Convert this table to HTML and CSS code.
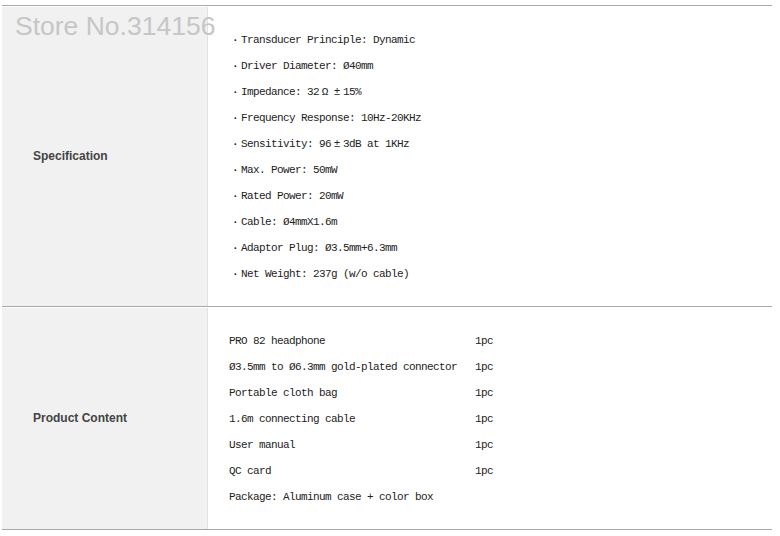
FILE: index.html
```html
<!DOCTYPE html>
<html>
<head>
<meta charset="utf-8">
<link rel="stylesheet" href="styles.css">
</head>
<body>
<div class="sheet">
  <div class="watermark">Store No.314156</div>
  <section class="row">
    <div class="label">Specification</div>
    <div class="value">
      <ul class="specs">
        <li>Transducer Principle: Dynamic</li>
        <li>Driver Diameter: Ø40mm</li>
        <li>Impedance: 32<span class="fw">Ω</span><span class="fw">±</span>15%</li>
        <li>Frequency Response: 10Hz-20KHz</li>
        <li>Sensitivity: 96<span class="fw">±</span>3dB at 1KHz</li>
        <li>Max. Power: 50mW</li>
        <li>Rated Power: 20mW</li>
        <li>Cable: Ø4mmX1.6m</li>
        <li>Adaptor Plug: Ø3.5mm+6.3mm</li>
        <li>Net Weight: 237g (w/o cable)</li>
      </ul>
    </div>
  </section>
  <section class="row">
    <div class="label">Product Content</div>
    <div class="value">
      <div class="items">
        <div class="item"><span class="name">PRO 82 headphone</span><span class="qty">1pc</span></div>
        <div class="item"><span class="name">Ø3.5mm to Ø6.3mm gold-plated connector</span><span class="qty">1pc</span></div>
        <div class="item"><span class="name">Portable cloth bag</span><span class="qty">1pc</span></div>
        <div class="item"><span class="name">1.6m connecting cable</span><span class="qty">1pc</span></div>
        <div class="item"><span class="name">User manual</span><span class="qty">1pc</span></div>
        <div class="item"><span class="name">QC card</span><span class="qty">1pc</span></div>
        <div class="item"><span class="name">Package: Aluminum case + color box</span></div>
      </div>
    </div>
  </section>
</div>
</body>
</html>
```
FILE: styles.css
```css
html, body {
  margin: 0;
  padding: 0;
  background: #ffffff;
}
.sheet {
  position: relative;
  width: 770px;
  margin: 5px 0 0 2px;
  border-top: 1px solid #a8a8a8;
}
.watermark {
  position: absolute;
  left: 13px;
  top: 5px;
  font-family: "Liberation Sans", Arial, sans-serif;
  font-size: 26.5px;
  color: #c6c6c6;
  white-space: nowrap;
  z-index: 2;
}
.row {
  display: flex;
  border-bottom: 1px solid #a8a8a8;
  border-top: 1px solid #ffffff;
}
.label {
  width: 206px;
  flex: none;
  background: #f1f1f1;
  border-right: 1px solid #e2e2e2;
  display: flex;
  align-items: center;
  padding-left: 31px;
  padding-bottom: 2px;
  box-sizing: border-box;
  font-family: "Liberation Sans", Arial, sans-serif;
  font-weight: bold;
  font-size: 12px;
  color: #444444;
}
.value {
  flex: 1;
  padding: 20px 0 19px 21px;
  font-family: "Liberation Mono", monospace;
  font-size: 11px;
  letter-spacing: -0.6px;
  color: #222222;
}
.specs {
  list-style: none;
  margin: 0;
  padding: 0;
}
.specs li {
  line-height: 26px;
  white-space: nowrap;
}
.specs li::before {
  content: "·";
  display: inline-block;
  width: 12px;
  text-align: center;
  font-weight: bold;
}
.fw {
  display: inline-block;
  width: 12px;
  text-align: center;
  letter-spacing: 0;
}
.item {
  display: flex;
  line-height: 26px;
  white-space: nowrap;
}
.name {
  width: 246px;
  flex: none;
}
```
